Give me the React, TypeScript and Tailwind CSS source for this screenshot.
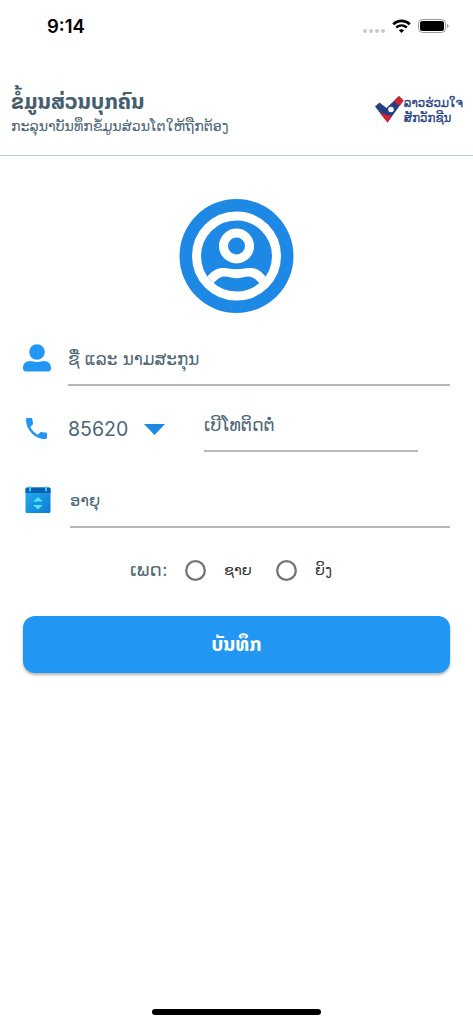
import React from "react";

const LAO = "font-['DejaVu_Sans','Noto_Sans_Lao',sans-serif]";
// bold Lao in DejaVu runs too wide for headings
const LAO_BOLD = "font-['Noto_Sans_Lao','Noto_Sans','DejaVu_Sans',sans-serif] font-bold";

function StatusBar() {
  return (
    <div className="flex h-[53px] items-center justify-between pl-[47px] pr-[24px] font-['Inter',sans-serif]">
      <span className="text-[18.5px] font-semibold leading-none text-black">9:14</span>
      <div className="flex items-center">
        <div className="mt-[8px] flex gap-[2px]">
          {[0, 1, 2, 3].map(i => <span key={i} className="h-1 w-1 rounded-full bg-[#c9c9c9]" />)}
        </div>
        <svg className="-mt-px ml-[7px]" width="19" height="14" viewBox="0 0 19 14" fill="none" stroke="#000">
          <path d="M1.2 5.2C6 .7 13 .7 17.8 5.2" strokeWidth="2.7" />
          <path d="M4.2 8.5c3.2-2.8 7.4-2.8 10.6 0" strokeWidth="2.5" />
          <path d="M6.8 11.2c1.6-1.3 3.8-1.3 5.4 0L9.500 14Z" fill="#000" stroke="none" />
        </svg>
        <svg className="-mt-px ml-[7px]" width="31" height="14" viewBox="0 0 31 14">
          <rect x=".5" y=".5" width="27" height="13" rx="4" fill="none" stroke="#999" />
          <rect x="2" y="2" width="24" height="10" rx="2.500" />
          <path d="M29 5c2 .5 2 3.500 0 4Z" fill="#999" />
        </svg>
      </div>
    </div>
  );
}

function Logo() {
  return (
    <div className="flex items-start">
      <svg width="29" height="27" viewBox="0 0 29 27">
        <path d="M0 10.500 4.500 6.500l7 5.500L24 0l4.500 4.500L12.500 26.500Z" fill="#243f82" />
        <path d="M19 5 24 0l4.500 4.500-4 5.500Z" fill="#d8232f" />
        <path d="m4.500 16.500 7 2.500 5.500 1-4.500 6.500Z" fill="#d8232f" />
        <circle cx="16" cy="13.500" r="2.800" fill="#fff" />
      </svg>
      <div className="flex flex-col gap-[1px] text-[11.8px] leading-[14px] text-[#26427f] [-webkit-text-stroke:0.3px_#26427f]">
        <span className="whitespace-nowrap">ລາວຮ່ວມໃຈ</span>
        <span className="whitespace-nowrap">ສັກວັກຊີນ</span>
      </div>
    </div>
  );
}

function Avatar() {
  return (
    <svg width="115" height="114" viewBox="0 0 115 114">
      <g transform="translate(.5 0)">
        <circle cx="57" cy="57" r="57" fill="#1e88e5" />
        <circle cx="57" cy="57" r="40" fill="none" stroke="#fff" strokeWidth="9" />
        <circle cx="57" cy="47" r="13" fill="none" stroke="#fff" strokeWidth="9" />
        <path d="M28 77.500C33 71.500 38 68.500 44 69c5 .2 8 1.200 13 1.200S65 69.200 70 69c6-.5 11 2.500 16 8.500l-6 6.800c-4-4.300-7-7-12-6.800-4 .5-7 1.800-11 1.800s-7-1.300-11-1.800c-5-.2-8 2.500-12 6.800Z" fill="#fff" />
      </g>
    </svg>
  );
}

function CalendarIcon() {
  return (
    <svg width="26" height="28" viewBox="0 0 26 28">
      <defs>
        <linearGradient id="cal" x1="0" y1="0" x2="1" y2="1">
          <stop offset="0" stopColor="#28afea" />
          <stop offset="1" stopColor="#0a7bd8" />
        </linearGradient>
      </defs>
      <rect x=".5" y="1.500" width="25" height="25.500" rx="1.500" fill="url(#cal)" />
      <path d="M.5 7V3Q.5 1.500 2 1.500h22q1.500 0 1.500 1.500v4Z" fill="#0863b5" />
      <path d="M5 1v3.500M21 1v3.500" stroke="#4fd5fa" strokeWidth="1.800" strokeLinecap="round" />
      <path d="m8.200 15.500 4.800-4.500 4.800 4.500ZM8.200 19h9.600L13 23.500Z" fill="#50e6ff" />
    </svg>
  );
}

function Radio({ label }: { label: string }) {
  return (
    <label className="flex items-center">
      <svg width="21" height="21" viewBox="0 0 21 21">
        <circle cx="10.500" cy="10.500" r="9.300" fill="none" stroke="#757575" strokeWidth="2.300" />
      </svg>
      <span className="ml-[18px] pt-px text-[14.5px] text-[#333]">{label}</span>
    </label>
  );
}

export default function App() {
  return (
    <div className={`flex h-[1024px] w-[473px] flex-col bg-white text-[#4b6675] ${LAO}`}>
      <StatusBar />
      <header className="flex h-[103px] items-start justify-between border-b border-[#b9cfdf] pl-[11px] pr-[10px] pt-[35px]">
        <div className="flex flex-col whitespace-nowrap">
          <h1 className={`text-[21.6px] leading-[26px] text-[#455f6e] ${LAO_BOLD}`}>ຂໍ້ມູນສ່ວນບຸກຄົນ</h1>
          <p className="text-[14.2px] leading-[24px]">ກະລຸນາບັນທຶກຂໍ້ມູນສ່ວນໂຕໃຫ້ຖືກຕ້ອງ</p>
        </div>
        <div className="mt-[8px]"><Logo /></div>
      </header>

      <main className="flex flex-col pl-[23px] pr-[23px]">
        <div className="mt-[43px] flex justify-center"><Avatar /></div>

        <div className="mt-[18px] flex h-[55px]">
          <svg className="mt-[13px]" width="28" height="28" viewBox="0 0 28 28" fill="#2196f3">
            <circle cx="14" cy="8" r="7.800" />
            <path d="M0 24c0-4 2.500-7 7-7 3 0 4 1 7 1s4-1 7-1c4.500 0 7 3 7 7 0 2.500-1 3.500-3 3.500H3c-2 0-3-1-3-3.500Z" />
          </svg>
          <div className="ml-[17px] flex-1 border-b-[2px] border-[#b8b8b8] pt-[15px] text-[16.8px] leading-[26px]">ຊື່ ແລະ ນາມສະກຸນ</div>
        </div>

        <div className="flex h-[66px]">
          <svg className="ml-[3px] mt-[32px]" width="21" height="21" viewBox="3 3 18 18" fill="#2196f3">
            <path d="M6.620 10.790c1.440 2.830 3.760 5.140 6.590 6.590l2.200-2.200c.27-.27.67-.36 1.020-.24 1.120.37 2.330.57 3.570.57.55 0 1 .45 1 1V20c0 .55-.45 1-1 1-9.390 0-17-7.610-17-17 0-.55.45-1 1-1h3.500c.55 0 1 .45 1 1 0 1.250.2 2.450.57 3.570.11.35.03.74-.25 1.020l-2.200 2.200z" />
          </svg>
          <span className="ml-[21px] mt-[30px] w-[76px] font-['Inter',sans-serif] text-[19.5px] leading-[26px]">85620</span>
          <svg className="mt-[38px]" width="21" height="11" viewBox="0 0 21 11"><path d="M0 0h21L10.500 11Z" fill="#1e88e5" /></svg>
          <div className="ml-[39px] w-[214px] whitespace-nowrap border-b-[2px] border-[#b8b8b8] pt-[26px] text-[17.4px] leading-[26px]">ເບີໂທຕິດຕໍ່</div>
        </div>

        <div className="flex h-[76px]">
          <div className="ml-[2px] mt-[34px]"><CalendarIcon /></div>
          <div className="ml-[19px] flex-1 border-b-[2px] border-[#b8b8b8] pt-[36px] text-[16.3px] leading-[26px]">ອາຍຸ</div>
        </div>

        <div className="mt-[27px] flex h-[30px] items-center pl-[107px]">
          <span className="w-[55px] text-[18.3px]">ເພດ:</span>
          <div className="w-[91px]"><Radio label="ຊາຍ" /></div>
          <Radio label="ຍິງ" />
        </div>

        <button className={`mt-[31px] h-[57px] rounded-[12px] bg-[#2196f3] text-[19.3px] text-white shadow-[0_2px_3px_rgba(0,0,0,0.3)] ${LAO_BOLD}`}>ບັນທຶກ</button>
      </main>

      <div className="mb-[9px] mt-auto h-[6px] w-[169px] self-center rounded-full bg-black" />
    </div>
  );
}
